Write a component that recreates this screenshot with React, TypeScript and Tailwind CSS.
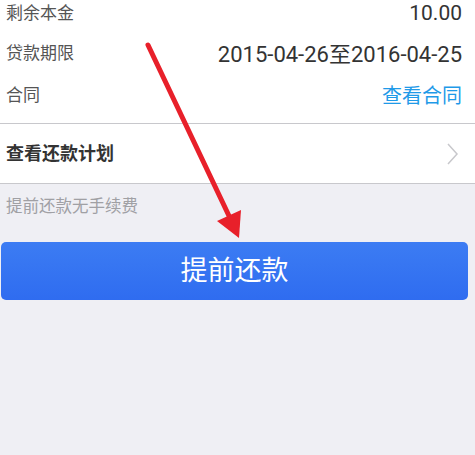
export default function App() {
  return (
    <div
      className="relative w-[475px] h-[455px] overflow-hidden bg-[#efeff4]"
      style={{ fontFamily: 'Roboto, "Noto Sans CJK SC", sans-serif' }}
    >
      {/* Loan info */}
      <div className="bg-white px-[6px] border-b border-[#c8c8cc] pb-[12px]">
        <div className="flex items-center justify-between h-[27px]">
          <span className="text-[17px] text-[#555]">剩余本金</span>
          <span className="text-[21px] text-[#333] pr-[7px]">10.00</span>
        </div>
        <div className="flex items-center justify-between h-[54px]">
          <span className="text-[17px] text-[#555]">贷款期限</span>
          <span className="text-[22px] text-[#333] pr-[7px]">2015-04-26至2016-04-25</span>
        </div>
        <div className="flex items-center justify-between h-[30px]">
          <span className="text-[17px] text-[#555]">合同</span>
          <span className="text-[20px] text-[#1f9ae8] pr-[7px]">查看合同</span>
        </div>
      </div>

      {/* Repayment plan */}
      <div className="bg-white h-[60px] px-[6px] flex items-center justify-between border-b border-[#c8c8cc]">
        <span className="text-[18px] font-bold text-[#333]">查看还款计划</span>
        <svg width="14" height="24" viewBox="0 0 14 24" className="mr-[9px]">
          <path d="M2 2 L11 12 L2 22" fill="none" stroke="#c8c8cc" strokeWidth="1.5" />
        </svg>
      </div>

      <div className="h-[46px] px-[6px] flex items-center">
        <span className="text-[16.5px] text-[#a0a0a4]">提前还款无手续费</span>
      </div>

      <div className="px-[1px] pr-[7px] mt-[12px]">
        <button className="w-full h-[58px] rounded-[5px] bg-gradient-to-b from-[#3c7cf3] to-[#2f6cf0] text-white text-[27px] flex items-center justify-center">
          提前还款
        </button>
      </div>

      {/* Annotation arrow */}
      <svg className="absolute inset-0 pointer-events-none" width="475" height="455">
        <line x1="148" y1="45" x2="230" y2="218" stroke="#e8202a" strokeWidth="5" strokeLinecap="round" />
        <polygon points="239,238 217,221 241,210" fill="#e8202a" />
      </svg>
    </div>
  );
}
